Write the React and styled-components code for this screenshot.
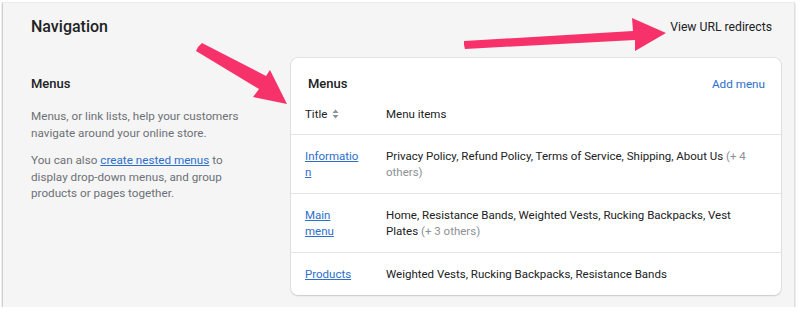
import React from "react";
import styled, { createGlobalStyle } from "styled-components";

const GlobalStyle = createGlobalStyle`
  html, body {
    margin: 0;
    padding: 0;
    background: #ffffff;
  }
  body {
    font-family: Roboto, "Noto Sans", "Liberation Sans", sans-serif;
    color: #202223;
    -webkit-font-smoothing: antialiased;
  }
`;

const Frame = styled.div`
  position: relative;
  box-sizing: border-box;
  margin: 2px 5px 0 2px;
  height: 305px;
  background: #f5f5f5;
  border-left: 1px solid #d2d2d2;
  border-right: 1px solid #dedede;
  border-top: 1px solid #ececec;
  box-shadow: 0 2px 1px rgba(0, 0, 0, 0.45);
  padding: 13px 22px 0 28px;
  overflow: hidden;
`;

const TopBar = styled.div`
  display: flex;
  align-items: center;
  justify-content: space-between;
  height: 22px;
`;

const PageTitle = styled.h1`
  margin: 0;
  font-size: 16px;
  font-weight: 500;
  line-height: 22px;
`;

const PlainAction = styled.span`
  font-size: 12.2px;
  line-height: 22px;
  color: #202223;
`;

const Layout = styled.div`
  display: grid;
  grid-template-columns: 260px 490px;
  margin-top: 20px;
`;

const Aside = styled.div`
  padding-top: 16px;
  width: 224px;
`;

const SectionTitle = styled.h2`
  margin: 0 0 14px;
  font-size: 13px;
  font-weight: 500;
  line-height: 20px;
`;

const Muted = styled.p`
  margin: 0 0 11px;
  font-size: 11.7px;
  line-height: 16.5px;
  color: #6d7175;
`;

const Link = styled.a`
  color: #2c6ecb;
  text-decoration: underline;
  cursor: pointer;
`;

const HeaderLink = styled.span`
  color: #2c6ecb;
  font-size: 11.7px;
  cursor: pointer;
`;

const Card = styled.div`
  background: #ffffff;
  border-radius: 7px;
  box-shadow: 0 0 0 1px rgba(0, 0, 0, 0.06), 0 1px 2px rgba(0, 0, 0, 0.12);
  padding-top: 16px;
`;

const CardHeader = styled.div`
  display: flex;
  justify-content: space-between;
  align-items: center;
  padding: 0 16px 0 17px;
`;

const CardTitle = styled.h2`
  margin: 0;
  font-size: 13px;
  font-weight: 500;
  line-height: 20px;
`;

const Row = styled.div`
  display: grid;
  grid-template-columns: 81px 379px;
  padding: ${(p) => (p.$head ? "12px 16px 12px 14px" : "13px 16px 13px 14px")};
  border-top: ${(p) => (p.$first ? "none" : "1px solid #e4e5e7")};
  font-size: 11.5px;
  line-height: 16px;
`;

const TitleCell = styled.div`
  width: 57px;
  word-break: break-all;
  display: flex;
  align-items: center;
  gap: 5px;
  align-self: start;
`;

const ItemsCell = styled.div`
  color: #202223;
`;

const Extra = styled.span`
  color: #8c9196;
`;

const Arrows = styled.svg`
  position: absolute;
  left: 0;
  top: 0;
  pointer-events: none;
`;

const SortIcon = () => (
  <svg width="7" height="10" viewBox="0 0 7 10">
    <path d="M3.5 0.5 L6.5 4 H0.5 Z" fill="#8c9196" />
    <path d="M3.5 9.5 L6.5 6 H0.5 Z" fill="#8c9196" />
  </svg>
);

const menus = [
  {
    title: "Information",
    items: "Privacy Policy, Refund Policy, Terms of Service, Shipping, About Us",
    extra: "(+ 4 others)",
  },
  {
    title: "Main menu",
    items: "Home, Resistance Bands, Weighted Vests, Rucking Backpacks, Vest Plates",
    extra: "(+ 3 others)",
  },
  {
    title: "Products",
    items: "Weighted Vests, Rucking Backpacks, Resistance Bands",
  },
];

export default function App() {
  return (
    <>
      <GlobalStyle />
      <Frame>
        <TopBar>
          <PageTitle>Navigation</PageTitle>
          <PlainAction>View URL redirects</PlainAction>
        </TopBar>
        <Layout>
          <Aside>
            <SectionTitle>Menus</SectionTitle>
            <Muted>Menus, or link lists, help your customers navigate around your online store.</Muted>
            <Muted>
              You can also <Link>create nested menus</Link> to display drop-down menus, and group
              products or pages together.
            </Muted>
          </Aside>
          <Card>
            <CardHeader>
              <CardTitle>Menus</CardTitle>
              <HeaderLink>Add menu</HeaderLink>
            </CardHeader>
            <Row $head $first>
              <TitleCell>
                Title <SortIcon />
              </TitleCell>
              <ItemsCell>Menu items</ItemsCell>
            </Row>
            {menus.map((m) => (
              <Row key={m.title}>
                <TitleCell>
                  <Link>{m.title === "Main menu" ? <>Main<br />menu</> : m.title}</Link>
                </TitleCell>
                <ItemsCell>
                  {m.items} {m.extra && <Extra>{m.extra}</Extra>}
                </ItemsCell>
              </Row>
            ))}
          </Card>
        </Layout>
        <Arrows width="800" height="312" viewBox="0 0 800 312">
          <path
            d="M195 44 L199 40 L263 73 L267 67 L284 101 L250 94 L256 86 L193 48 Z"
            fill="#f7326b"
          />
          <path
            d="M461 42 L461 38 L630 28 L629 15 L663 30 L632 48 L632 37 L462 46 Z"
            fill="#f7326b"
          />
        </Arrows>
      </Frame>
    </>
  );
}
